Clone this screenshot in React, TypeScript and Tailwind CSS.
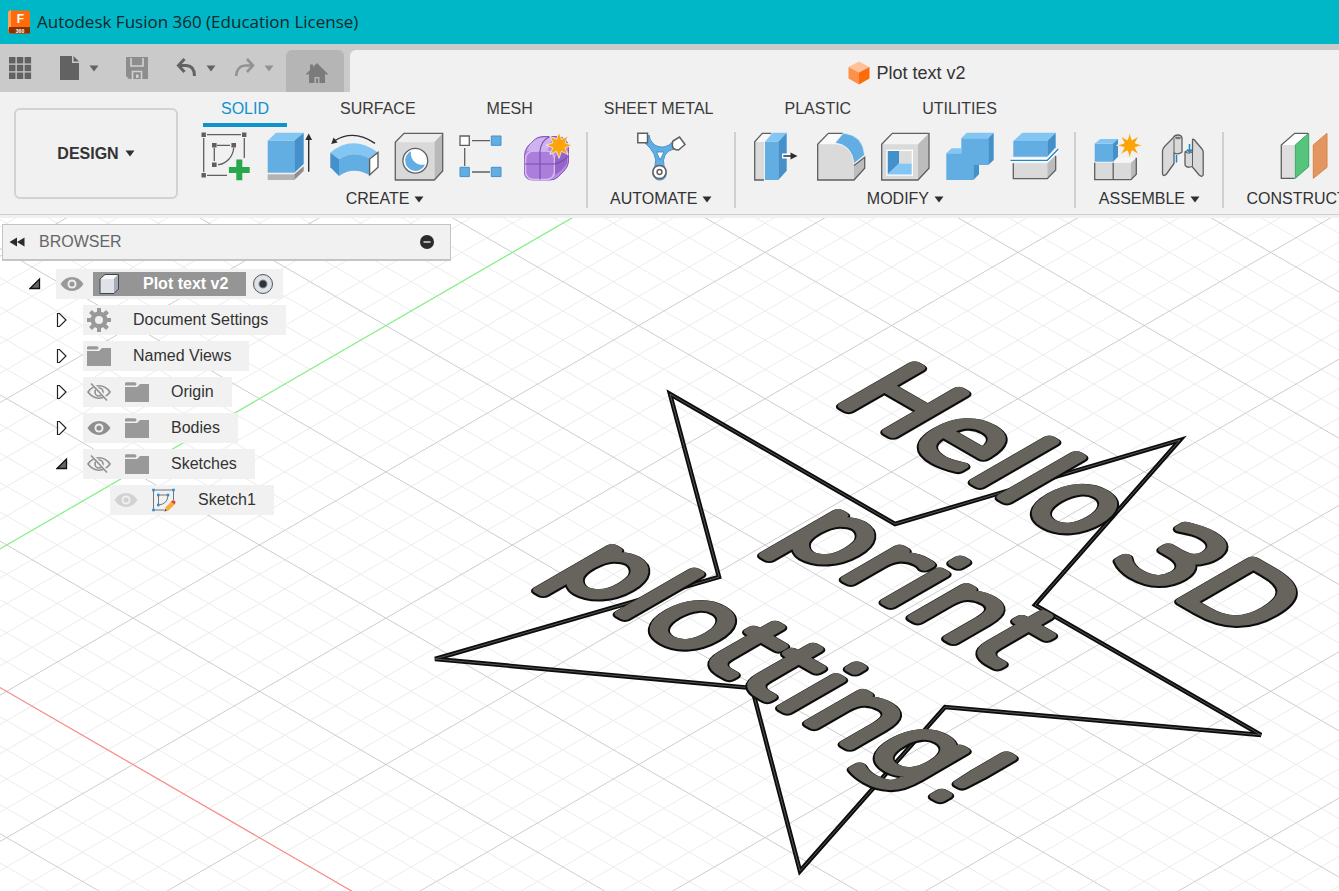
import { useState } from 'react';
import type { ReactNode } from 'react';

const INK = '#5f5f5f';
const BLUE = '#62aee3';
const BLUE_LIGHT = '#83c5f3';
const BLUE_DARK = '#4490cb';

function burst(cx: number, cy: number, outer: number, inner: number) {
  return Array.from({ length: 16 }, (_, i) => {
    const r = i % 2 ? inner : outer;
    const a = (Math.PI / 8) * i;
    return `${(cx + r * Math.sin(a)).toFixed(1)},${(cy - r * Math.cos(a)).toFixed(1)}`;
  }).join(' ');
}

function Icon({ children }: { children: ReactNode }) {
  return (
    <svg viewBox="0 0 48 48" className="h-12 w-12 overflow-visible" aria-hidden="true">
      {children}
    </svg>
  );
}

function Caret({ className = 'text-[#2f2f2f]' }: { className?: string }) {
  return (
    <svg viewBox="0 0 10 7" className={`h-[7px] w-2.5 ${className}`} aria-hidden="true">
      <path d="M0.5 0.5h9L5 6.5z" fill="currentColor" />
    </svg>
  );
}

/* ---------- ribbon icons ---------- */

function SketchIcon() {
  return (
    <Icon>
      <g stroke={INK} strokeWidth="1.3" fill="none">
        <path d="M6 2.7h34M2.7 6v34M43.3 6v20M6 43.3h20M16 13.3h13M13.3 16v13M32.7 16C32 25 25 32 17 32.7" />
      </g>
      <g fill={INK}>
        <path d="M.5.5h4.4v4.4H.5zM41 .5h4.4v4.4H41zM.5 41h4.4v4.4H.5zM11 11h4.6v4.6H11zM30.4 11H35v4.6h-4.6zM11 30.4h4.6V35H11z" />
      </g>
      <path d="M35.3 27.5h6v7.4h7.4v6h-7.4v7.4h-6v-7.4h-7.4v-6h7.4z" fill="#27a94b" />
    </Icon>
  );
}

function ExtrudeIcon() {
  return (
    <Icon>
      <path d="M2.7 42.3h26.6V48H2.7z" fill="#b3b3b3" />
      <path d="M29.3 42.3l9.4-8V39l-9.4 9z" fill="#8f8f8f" />
      <path d="M2.7 8.7h26.6v32H2.7z" fill={BLUE} />
      <path d="M2.7 8.7l8.3-8h27.7l-9.4 8z" fill={BLUE_LIGHT} />
      <path d="M29.3 8.7l9.4-8V32l-9.4 8.7z" fill={BLUE_DARK} />
      <path d="M43.7 39.7V6" stroke="#2d2d2d" strokeWidth="1.4" />
      <path d="M43.7 1.5l3.4 6.5h-6.8z" fill="#2d2d2d" />
    </Icon>
  );
}

function RevolveIcon() {
  return (
    <Icon>
      <path d="M46 11.3Q25 -3 6 8.5" stroke="#2d2d2d" strokeWidth="1.4" fill="none" />
      <path d="M2.2 12l2.4-6.5 4 5z" fill="#2d2d2d" />
      <path d="M1.3 20.7Q24 2 49 20.7L40.3 26.3Q24 17.5 10 27.3z" fill={BLUE_LIGHT} />
      <path d="M10 27.3Q24 17.5 40.3 26.3V43Q24 34 10 44z" fill={BLUE} />
      <path d="M1.3 20.7L10 27.3V44L1.3 35.3z" fill={BLUE_DARK} />
      <path d="M40.6 27L49 20.5v14.8L40.6 43z" fill="#fff" stroke={INK} strokeWidth="1.4" />
    </Icon>
  );
}

function HoleIcon() {
  return (
    <Icon>
      <path d="M2.3 10.3L11 1.3h38.7l-8.4 9z" fill="#eeeeee" />
      <path d="M41.3 10.3l8.4-9V39l-8.4 9z" fill="#b9b9b9" />
      <path d="M2.3 10.3h39V48h-39z" fill="#d9d9d9" />
      <path d="M2.3 10.3L11 1.3h38.7V39l-8.4 9h-39z" fill="none" stroke={INK} strokeWidth="1.3" />
      <circle cx="22.3" cy="28.7" r="12.4" fill="#fff" stroke={INK} strokeWidth="1.3" />
      <path d="M18 19.3a10.3 10.3 0 1 0 14 13.2A11.500 11.500 0 0 1 18 19.3z" fill={BLUE} />
    </Icon>
  );
}

function PatternIcon() {
  return (
    <Icon>
      <path d="M15 8.7h18M15 40h18M7.7 16v18" stroke={INK} strokeWidth="1.3" />
      <path d="M3 4h9.3v9.3H3z" fill="#fff" stroke={INK} strokeWidth="1.3" />
      <path d="M34.3 4H44v9.3h-9.7zM3 35.3h9.3v9.3H3zM34.3 35.3H44v9.3h-9.7z" fill={BLUE} stroke={BLUE_DARK} />
    </Icon>
  );
}

function FormIcon() {
  return (
    <Icon>
      <path
        d="M3.5 24Q3.5 18 7 14L12 9Q16 4.5 22 4.5H36Q47 5 47.5 16V30Q47 35 43 39L37 45Q34 48 29 48H12Q3.5 48 3.5 40z"
        fill="#b58be2"
        stroke="#8a57bd"
      />
      <path d="M6 19Q7 13 14 8Q18 5 24 5.5H34Q28 9 27 18z" fill="#cfb2f0" />
      <rect x="4.5" y="19" width="29" height="28.5" rx="8" fill="#ab7edb" stroke="#d6bdf3" strokeWidth="1.5" />
      <path d="M34 26Q36 20 46 17V31Q42 38 34 43z" fill="#9465c7" />
      <path d="M19 19V47.5M4 32H33.5Q42 30 47 24M19 19Q20 9 28 5" stroke="#7f4db4" strokeWidth="1.2" fill="none" />
      <polygon points={burst(38, 13.3, 13, 6.5)} fill="#fba50b" stroke="#f1f1f1" strokeWidth="0.8" />
    </Icon>
  );
}

function AutomateIcon() {
  return (
    <Icon>
      <path
        d="M8 11Q14 16 17 22Q20 28 18 34Q15 38 16 43Q18 48 22.5 48Q28 48 29 43Q30 38 27 34Q25.5 28 28 23Q31 18 37 17L36 9Q33 14 27 15Q20 15.5 16 11.5Q12.5 8 12 3z"
        fill={BLUE}
        stroke={BLUE_DARK}
      />
      <path d="M19.5 20h7.5l-4 8z" fill="#fff" stroke={BLUE_DARK} />
      <path d="M.8 1.3h9.7v9.4H.8z" fill="#fff" stroke={INK} strokeWidth="1.5" />
      <path d="M36 9l6.5-4 5.5 7.5-6.5 5.5q-5 0-6-3.5-.5-3 .5-5.5z" fill="#fff" stroke={INK} strokeWidth="1.5" />
      <circle cx="22.5" cy="40" r="6.6" fill="#fff" stroke={INK} strokeWidth="1.5" />
      <circle cx="22.5" cy="40" r="2.4" fill="none" stroke={INK} strokeWidth="1.5" />
    </Icon>
  );
}

function PressPullIcon() {
  return (
    <Icon>
      <path d="M1.7 9.7H11V48H1.7z" fill="#dadada" />
      <path d="M1.7 9.7L9.3 1.3h9.4L11 9.7z" fill="#f8f8f8" />
      <path d="M11 48H1.7V9.7L9.3 1.3h9" fill="none" stroke={INK} strokeWidth="1.3" />
      <path d="M12 9.7h13.3V48H12z" fill={BLUE} />
      <path d="M12 9.7l7.7-9h14l-8.4 9z" fill={BLUE_LIGHT} />
      <path d="M25.3 9.7l8.4-9v38l-8.4 9.3z" fill={BLUE_DARK} />
      <path d="M29 24h9" stroke="#fff" strokeWidth="5" />
      <path d="M30.3 24h9" stroke="#2d2d2d" strokeWidth="1.5" />
      <path d="M37.5 20.5l7 3.5-7 3.5z" fill="#2d2d2d" />
    </Icon>
  );
}

function FilletIcon() {
  return (
    <Icon>
      <path d="M.7 12.3L11.3 1.3h15L18.7 12.3z" fill="#fafafa" />
      <path d="M.7 12.3h18Q36 14 37 33v15H.7z" fill="#dadada" />
      <path d="M37 33.5l10.7-8.2v11L37 48z" fill="#bdbdbd" />
      <path d="M26.3 1.3h-15L.7 12.3V48H37l10.7-11.7v-11L37 33.5" fill="none" stroke={INK} strokeWidth="1.3" />
      <path d="M26.3 1Q46 3 47.7 23L37 31.6Q35 13 18 11z" fill={BLUE} stroke="#f4f4f4" strokeWidth="0.8" />
    </Icon>
  );
}

function ShellIcon() {
  return (
    <Icon>
      <path d="M.7 12.3L11.3 1.3H48L37 12.3z" fill="#f3f3f3" />
      <path d="M37 12.3l11-11v35L37 48z" fill="#bcbcbc" />
      <path d="M.7 12.3H37V48H.7z" fill="#dadada" />
      <path d="M.7 12.3L11.3 1.3H48v35L37 48H.7z" fill="none" stroke={INK} strokeWidth="1.3" />
      <path d="M5.3 17.7H32v26H5.3z" fill="#fff" />
      <path d="M18 19h12.7v12.5H18z" fill="#dcdcdc" />
      <path d="M6.7 19H18v12.5l-11.3 11z" fill={BLUE_DARK} />
      <path d="M18 31.5h12.7v11h-24z" fill={BLUE_LIGHT} />
    </Icon>
  );
}

function CombineIcon() {
  return (
    <Icon>
      <path d="M1.3 21.3h15v-15h27V33h-15v15h-27z" fill={BLUE} />
      <path d="M16.3 6.3L21.7.7h27l-5.4 5.6zM1.3 21.3l5.4-5h9.6v5z" fill={BLUE_LIGHT} />
      <path d="M43.3 6.3L48.7.7V28l-5.4 5zM28.3 33H34v9.3L28.3 48z" fill={BLUE_DARK} />
    </Icon>
  );
}

function SplitIcon() {
  return (
    <Icon>
      <path d="M4.3 9h34v15.7h-34z" fill={BLUE} />
      <path d="M4.3 9l9-8.3h33.4L38.3 9z" fill={BLUE_LIGHT} />
      <path d="M38.3 9l8.4-8.3v14.6l-8.4 9.4z" fill={BLUE_DARK} />
      <path d="M4.3 31.3h34v15.4h-34z" fill="#dadada" />
      <path d="M38.3 31.3l8.4-8.3v15l-8.4 8.7z" fill="#bcbcbc" />
      <path d="M4.3 31.3v15.4h34l8.4-8.7V24" fill="none" stroke={INK} strokeWidth="1.3" />
      <path d="M1.5 28.3h36.8L49.3 17" fill="none" stroke="#fff" strokeWidth="4" />
      <path d="M1.5 28.3h36.8L49.3 17" fill="none" stroke="#1b87c9" strokeWidth="1.3" />
    </Icon>
  );
}

function ComponentIcon() {
  return (
    <Icon>
      <path d="M1.7 11.5H20v18.2H1.7z" fill={BLUE} />
      <path d="M1.7 11.5L7.3 7H25l-5 4.5z" fill={BLUE_LIGHT} />
      <path d="M20 11.5L25 7v17.7l-5 5z" fill={BLUE_DARK} />
      <path d="M1.7 30.7h36.3v17H1.7z" fill="#dadada" />
      <path d="M20.5 30.7l5.2-5h17.6l-5.3 5z" fill="#f6f6f6" />
      <path d="M38 30.7l5.3-5v16.6L38 47.7z" fill="#b9b9b9" />
      <path d="M1.7 30.7v17H38l5.3-5.4V25.7M20.2 30.7v17" fill="none" stroke={INK} strokeWidth="1.3" />
      <polygon points={burst(36.7, 13.3, 13, 6)} fill="#fba50b" stroke="#f1f1f1" />
    </Icon>
  );
}

function JointIcon() {
  return (
    <Icon>
      <g fill="#d9d9d9" stroke={INK} strokeWidth="1.3" strokeLinejoin="round">
        <path d="M5.5 19Q6 16 8 14L16 6Q17.500 3 21 3Q24.500 3 25 6V20Q21.500 23 17 21V31.5L9.500 42Q6.500 45 5.500 42z" />
        <path d="M35.500 8q0-1.500 1.500-.5L45 17q1.200 1.500 1.200 3V43q-1.500 2.500-4 0L35 34.500Q29.500 36.500 28 33V20Q30.500 17.500 35.500 19z" />
      </g>
      <path d="M17 6.500v14.500" stroke={INK} />
      <ellipse cx="21" cy="6" rx="3" ry="1.300" fill="#777" />
      <path d="M28.300 20Q31.500 22.500 35.500 20M35.500 19v15" stroke={INK} fill="none" />
      <path d="M19.500 23v7.500M32.500 12v8M30.300 17.500l2.200 2.500 2.200-2.500" stroke="#1b87c9" strokeWidth="1.500" fill="none" />
    </Icon>
  );
}

function ConstructIcon() {
  return (
    <Icon>
      <path d="M1.3 13L14.7 1.3H28L15 13v33.3H1.3z" fill="#fff" />
      <path d="M1.3 13h13.4v33.3H1.3z" fill="#dedede" />
      <path d="M14.7 46.3H1.3V13L14.7 1.3H28" fill="none" stroke={INK} strokeWidth="1.3" />
      <path d="M15.3 13l13.4-11.7v33.4L15.3 46.3z" fill="#57c47d" stroke="#3aa362" />
      <path d="M33.3 13L47 1.3v34L33.3 46.3z" fill="#e3965f" stroke="#d98345" />
    </Icon>
  );
}

/* ---------- browser tree icons ---------- */

function EyeIcon({ className }: { className: string }) {
  return (
    <svg viewBox="0 0 24 24" className={`h-6 w-6 ${className}`} aria-hidden="true">
      <path d="M.5 12Q5 5 12 5t11.5 7Q19 19 12 19T.5 12z" fill="currentColor" />
      <circle cx="12" cy="12" r="4.5" fill="#f0f0f0" />
      <circle cx="12" cy="12" r="2.6" fill="currentColor" />
    </svg>
  );
}

function EyeOffIcon() {
  return (
    <svg viewBox="0 0 24 24" className="h-6 w-6 text-[#8f8f8f]" aria-hidden="true">
      <g fill="none" stroke="currentColor" strokeWidth="1.6">
        <path d="M1 12Q5.5 5.8 12 5.8T23 12Q18.5 18.2 12 18.2T1 12z" />
        <circle cx="12" cy="12" r="4" />
        <path d="M5 3.5L21 20.5" stroke="#f0f0f0" strokeWidth="3" />
        <path d="M4 3.5L20 20.5" />
      </g>
    </svg>
  );
}

function FolderIcon() {
  return (
    <svg viewBox="0 0 24 24" className="h-6 w-6" aria-hidden="true">
      <path d="M0 7h12l3-3H24v18H0z" fill="#999" />
      <path d="M0 5.5V3.5Q0 2.3 1.5 2.3H9.5Q11.5 2.3 11.5 4V4.5L10.5 5.5z" fill="#999" />
    </svg>
  );
}

function GearIcon() {
  return (
    <svg viewBox="0 0 24 24" className="h-6 w-6" aria-hidden="true">
      <g stroke="#999" strokeWidth="4">
        <path d="M12 0v24M0 12h24M3.5 3.5l17 17M20.5 3.5l-17 17" />
      </g>
      <circle cx="12" cy="12" r="8.5" fill="#999" />
      <circle cx="12" cy="12" r="4" fill="#f0f0f0" />
    </svg>
  );
}

function SketchNodeIcon() {
  return (
    <svg viewBox="0 0 24 24" className="h-6 w-6" aria-hidden="true">
      <path d="M1.5 2h20v10M1.5 2v20h11M6.5 7h9.5Q16 16 6.5 17z" fill="none" stroke="#777" />
      <path
        d="M.2.7h2.6v2.6H.2zM20.2.7h2.6v2.6h-2.6zM.2 20.7h2.6v2.6H.2zM5 5.7h2.6v2.6H5zM14.7 5.7h2.6v2.6h-2.6zM5 15.7h2.6v2.6H5z"
        fill="#2a8fd6"
      />
      <path d="M12.5 23.5l1.3-4.5 6-6 3.5 3-6.5 6.2z" fill="#f3ae3d" />
      <path d="M19 13.7l1.3-1.2q2-.8 3.3 1.5l-.8 2.3z" fill="#d9413c" />
      <path d="M12.5 23.5l.8-2.5 1.7 1.5z" fill="#444" />
    </svg>
  );
}

function BodyIcon() {
  return (
    <svg viewBox="0 0 22 22" className="h-[22px] w-[22px]" aria-hidden="true">
      <path d="M2 6l5-4.5h13.5L16 6z" fill="#f7f9fb" />
      <path d="M16 6l4.5-4.5v14.5L16 20.5z" fill="#a6adb6" />
      <path d="M2 6h14v14.5H2z" fill="#dfe3e9" />
      <path d="M2 6l5-4.5h13.5v14.5L16 20.5H2z" fill="none" stroke="#3f444b" strokeLinejoin="round" />
    </svg>
  );
}

/* ---------- data ---------- */

const tabs = ['SOLID', 'SURFACE', 'MESH', 'SHEET METAL', 'PLASTIC', 'UTILITIES'];

const groups = [
  {
    label: 'CREATE',
    tools: [
      { name: 'Create Sketch', icon: <SketchIcon /> },
      { name: 'Extrude', icon: <ExtrudeIcon /> },
      { name: 'Revolve', icon: <RevolveIcon /> },
      { name: 'Hole', icon: <HoleIcon /> },
      { name: 'Rectangular Pattern', icon: <PatternIcon /> },
      { name: 'Create Form', icon: <FormIcon /> },
    ],
  },
  { label: 'AUTOMATE', tools: [{ name: 'Automated Modeling', icon: <AutomateIcon /> }] },
  {
    label: 'MODIFY',
    tools: [
      { name: 'Press Pull', icon: <PressPullIcon /> },
      { name: 'Fillet', icon: <FilletIcon /> },
      { name: 'Shell', icon: <ShellIcon /> },
      { name: 'Combine', icon: <CombineIcon /> },
      { name: 'Split Body', icon: <SplitIcon /> },
    ],
  },
  {
    label: 'ASSEMBLE',
    tools: [
      { name: 'New Component', icon: <ComponentIcon /> },
      { name: 'Joint', icon: <JointIcon /> },
    ],
  },
  { label: 'CONSTRUCT', tools: [{ name: 'Offset Plane', icon: <ConstructIcon /> }] },
];

type TreeNode = {
  label: string;
  icon: ReactNode;
  indent: string;
  expanded?: boolean;
  eye?: 'on' | 'off' | 'dim';
};

const nodes: TreeNode[] = [
  { label: 'Document Settings', icon: <GearIcon />, indent: 'pl-14', expanded: false },
  { label: 'Named Views', icon: <FolderIcon />, indent: 'pl-14', expanded: false },
  { label: 'Origin', icon: <FolderIcon />, indent: 'pl-14', expanded: false, eye: 'off' },
  { label: 'Bodies', icon: <FolderIcon />, indent: 'pl-14', expanded: false, eye: 'on' },
  { label: 'Sketches', icon: <FolderIcon />, indent: 'pl-14', expanded: true, eye: 'off' },
  { label: 'Sketch1', icon: <SketchNodeIcon />, indent: 'pl-[83px]', eye: 'dim' },
];

/* ---------- viewport ---------- */

// Half the width and height of one major grid cell, and where the grid starts
const CELL_X = 126.4;
const CELL_Y = 73.15;
const ORIGIN_X = 6.7;
const ORIGIN_Y = 327;

function gridPath(divisions: number, skipMajor: boolean) {
  const slope = CELL_Y / CELL_X;
  const step = (CELL_Y * 2) / divisions;
  const reach = 4000;
  let d = '';
  for (let i = -20 * divisions; i <= 20 * divisions; i++) {
    if (skipMajor && i % divisions === 0) continue;
    const y = ORIGIN_Y + i * step;
    d += `M${ORIGIN_X - reach} ${y - reach * slope}L${ORIGIN_X + reach} ${y + reach * slope}`;
    d += `M${ORIGIN_X - reach} ${y + reach * slope}L${ORIGIN_X + reach} ${y - reach * slope}`;
  }
  return d;
}

const STAR = '670,176 895,306 1180,222 1035,387 1261,517 945,489 800,653 752,470 435,441 719,359';

const engraving = [
  { text: 'Hello 3D', x: 832, y: 181 },
  { text: 'print', x: 774, y: 319 },
  { text: 'plotting!', x: 548, y: 354 },
];

function Viewport() {
  return (
    <svg className="absolute inset-0 h-full w-full" role="img" aria-label="Model view">
      <path d={gridPath(5, true)} stroke="#ececec" fill="none" />
      <path d={gridPath(1, false)} stroke="#cdcdcd" fill="none" />
      <path d="M-10 463.8L1990 1621.2" stroke="#ff8d8d" strokeWidth="1.2" />
      <path d="M-10 336.7L1990 -820.7" stroke="#86f586" strokeWidth="1.2" />
      <polygon points={STAR} fill="none" stroke="#0c0c0c" strokeWidth="4.5" />
      <polygon points={STAR} fill="none" stroke="#55554f" strokeWidth="1" />
      {engraving.map((line) => (
        <g
          key={line.text}
          transform={`matrix(0.866 0.5 -0.866 0.5 ${line.x} ${line.y})`}
          className="font-['DejaVu_Sans',sans-serif] text-[112px] font-extralight"
          strokeLinejoin="round"
        >
          <text x="1" y="1" fill="#0c0c0c" stroke="#0c0c0c" strokeWidth="13" aria-hidden="true">
            {line.text}
          </text>
          <text fill="#66645c" stroke="#66645c" strokeWidth="10">
            {line.text}
          </text>
        </g>
      ))}
    </svg>
  );
}

/* ---------- sections ---------- */

function TitleBar() {
  return (
    <header className="flex h-11 items-center gap-1.5 bg-[#00b7c7] pl-2">
      <svg viewBox="0 0 23 26" className="h-[26px] w-[23px]" aria-hidden="true">
        <path d="M2 1.5h18q2 0 2 2v21H2q-2 0-2-2v-19q0-2 2-2z" fill="#ff6b0b" />
        <path d="M0 3l3-2.5V18L0 20z" fill="#ffa45c" />
        <path d="M1 18h21v6.5H3q-2 0-2-2z" fill="#8a3300" />
        <text x="12.5" y="14" textAnchor="middle" className="font-['Liberation_Sans',sans-serif] text-[12px] font-bold" fill="#fff">
          F
        </text>
        <text x="12" y="23.5" textAnchor="middle" className="font-['Liberation_Sans',sans-serif] text-[5px] font-bold" fill="#fff">
          360
        </text>
      </svg>
      <h1 className="font-['Open_Sans',sans-serif] text-[17px] text-[#10282b]">
        Autodesk Fusion 360 (Education License)
      </h1>
    </header>
  );
}

function QuickBar() {
  return (
    <div className="flex h-12 items-end bg-[#cacaca]">
      <div className="flex h-12 w-[286px] shrink-0 items-center pl-2">
        <button type="button" aria-label="Data panel" className="w-[51px] text-[#626262]">
          <svg viewBox="0 0 24 24" className="h-6 w-6">
            <path
              d="M1 1h6.5v6.5H1zM8.8 1h6.5v6.5H8.8zM16.6 1h6.5v6.5h-6.5zM1 8.8h6.5v6.5H1zM8.8 8.8h6.5v6.5H8.8zM16.6 8.8h6.5v6.5h-6.5zM1 16.6h6.5v6.5H1zM8.8 16.6h6.5v6.5H8.8zM16.6 16.6h6.5v6.5h-6.5z"
              fill="currentColor"
            />
          </svg>
        </button>
        <button type="button" aria-label="File" className="flex w-[66px] items-center gap-2 text-[#626262]">
          <svg viewBox="0 0 22 26" className="h-[26px] w-[22px]">
            <path d="M1 1h12v7h7v17H1z" fill="currentColor" />
            <path d="M14.5 1v5.5H20z" fill="currentColor" />
          </svg>
          <Caret className="text-[#626262]" />
        </button>
        <button type="button" aria-label="Save" className="w-[50px] text-[#8d8d8d]">
          <svg viewBox="0 0 24 24" className="h-6 w-6">
            <path d="M1 1h22v22H4l-3-3z" fill="currentColor" />
            <path d="M6 2v8h12V2M7.5 23v-7.5h9V23" fill="none" stroke="#d2d2d2" strokeWidth="1.6" />
            <path d="M11 18.5h2.5V22H11z" fill="#d2d2d2" />
          </svg>
        </button>
        <button type="button" aria-label="Undo" className="flex w-[58px] items-center gap-[9px] text-[#626262]">
          <svg viewBox="0 0 22 22" className="h-[22px] w-[22px]">
            <path d="M9.5 2L3.5 8.5l6 6.5M4 8.5h7.5q8 .5 8 10.5" fill="none" stroke="currentColor" strokeWidth="3" />
          </svg>
          <Caret className="text-[#626262]" />
        </button>
        <button type="button" aria-label="Redo" className="flex items-center gap-[9px] text-[#929292]">
          <svg viewBox="0 0 22 22" className="h-[22px] w-[22px]">
            <path d="M14 2l6 6.5-6 6.5M20 8.5h-8q-8 .5-9 10.5" fill="none" stroke="currentColor" strokeWidth="2.6" />
          </svg>
          <Caret className="text-[#929292]" />
        </button>
      </div>
      <button
        type="button"
        aria-label="Home"
        className="mr-1.5 flex h-[42px] w-[58px] shrink-0 items-center justify-center rounded-t-md bg-[#b5b5b5] pt-1 pl-1 text-[#7b7b7b]"
      >
        <svg viewBox="0 0 22 20" className="h-5 w-[22px]">
          <path d="M11 0L22 11l-1.3 1L19 10.5V20h-5.5v-6h-5v6H3v-9.5L1.3 12 0 11l4-4V1.5h3V4z" fill="currentColor" />
          <path d="M10 15.5h2.2V20H10z" fill="currentColor" />
        </svg>
      </button>
      <div className="flex h-[42px] grow items-center justify-center gap-1.5 rounded-tl-md bg-[#f1f1f1] pt-1 pl-[125px] text-[18px] text-[#333]">
        <svg viewBox="0 0 22 24" className="h-6 w-[22px]" aria-hidden="true">
          <path d="M11 .5L21.5 6 11 11.5.5 6z" fill="#ffc09a" />
          <path d="M.5 6L11 11.5V23.5L.5 17.5z" fill="#fe9149" />
          <path d="M21.5 6L11 11.5V23.5l10.5-6z" fill="#fd6c0c" />
        </svg>
        <span>Plot text v2</span>
      </div>
    </div>
  );
}

function Ribbon() {
  const [active, setActive] = useState('SOLID');

  return (
    <div className="flex h-[123px] gap-[5px] overflow-hidden border-b border-[#cfcfcf] bg-[#f1f1f1] pl-3.5 text-base">
      <button
        type="button"
        className="mt-4 flex h-[91px] w-[164px] shrink-0 items-center justify-center gap-1.5 rounded-md border-2 border-[#d2d2d2] font-bold"
      >
        DESIGN
        <Caret />
      </button>
      <div className="flex min-w-0 flex-col">
        <nav className="flex gap-[35px] pl-5">
          {tabs.map((tab) => (
            <button
              key={tab}
              type="button"
              onClick={() => setActive(tab)}
              className={`h-[35px] shrink-0 border-b-4 px-[18px] pt-0.5 ${
                active === tab ? 'border-[#0e93cf] text-[#0e93cf]' : 'border-transparent text-[#3a3a3a]'
              }`}
            >
              {tab}
            </button>
          ))}
        </nav>
        <div className="mt-[5px] flex">
          {groups.map((group) => (
            <div
              key={group.label}
              className="flex h-[76px] shrink-0 flex-col items-center border-r-2 border-[#d0d0d0] px-[17px] first:pl-[18px] last:border-r-0"
            >
              <div className="flex gap-4">
                {group.tools.map((tool) => (
                  <button key={tool.name} type="button" aria-label={tool.name}>
                    {tool.icon}
                  </button>
                ))}
              </div>
              <button type="button" className="mt-[9px] flex items-center gap-[5px] px-[5px] leading-5">
                {group.label}
                <Caret />
              </button>
            </div>
          ))}
        </div>
      </div>
    </div>
  );
}

function Toggle({ expanded }: { expanded: boolean }) {
  return (
    <button type="button" aria-label={expanded ? 'Collapse' : 'Expand'} className="w-[27px] shrink-0">
      <svg viewBox="0 0 12 16" className="h-4 w-3">
        {expanded ? (
          <path d="M1 12.5L10.5 3v9.5z" fill="#666" stroke="#111" strokeWidth="1.3" />
        ) : (
          <path d="M1.5 1.5h2L10 8l-6.5 6.5h-2z" fill="#fff" stroke="#222" strokeWidth="1.2" />
        )}
      </svg>
    </button>
  );
}

function BrowserPanel() {
  return (
    <aside className="relative mt-1.5 ml-0.5 w-[449px]">
      <div className="flex h-[37px] items-center border border-b-2 border-[#c4c4c4] bg-[#f1f1f1] pr-4 pl-1.5">
        <button type="button" aria-label="Collapse panel" className="mr-3.5">
          <svg viewBox="0 0 16 10" className="h-2.5 w-4">
            <path d="M8 .5v9L.5 5zM15.5.5v9L8 5z" fill="#2b2b2b" />
          </svg>
        </button>
        <h2 className="grow text-base text-[#666]">BROWSER</h2>
        <button type="button" aria-label="Display settings">
          <svg viewBox="0 0 14 14" className="h-3.5 w-3.5">
            <circle cx="7" cy="7" r="7" fill="#2b2b2b" />
            <path d="M3.5 7h7" stroke="#ddd" strokeWidth="1.5" />
          </svg>
        </button>
      </div>
      <ul className="-ml-0.5 pt-[5px] text-base text-[#333]">
        <li className="flex h-9 items-center pl-[29px]">
          <Toggle expanded />
          <div className="flex h-[30px] items-center gap-[9px] bg-[#f1f1f1] pr-2.5 pl-1">
            <button type="button" aria-label="Hide Plot text v2">
              <EyeIcon className="text-[#999]" />
            </button>
            <label
              htmlFor="activate"
              className="flex h-6 items-center gap-[23px] bg-[#959595] pr-[18px] pl-[5px] font-bold text-white"
            >
              <BodyIcon />
              Plot text v2
            </label>
            <input
              id="activate"
              type="radio"
              defaultChecked
              className="-ml-0.5 h-5 w-5 appearance-none rounded-full border border-[#555] bg-[radial-gradient(circle,#30343a_0_3px,#e3e7ed_5px,#cdd3dc)]"
            />
          </div>
        </li>
        {nodes.map((node) => (
          <li key={node.label} className={`flex h-9 items-center ${node.indent}`}>
            {node.expanded !== undefined ? <Toggle expanded={node.expanded} /> : <span className="w-[27px]" />}
            <div className="flex h-[30px] items-center bg-[#f1f1f1] pr-[18px] pl-1">
              {node.eye && (
                <button type="button" aria-label={`Visibility of ${node.label}`} className="mr-3.5">
                  {node.eye === 'off' ? (
                    <EyeOffIcon />
                  ) : (
                    <EyeIcon className={node.eye === 'on' ? 'text-[#8f8f8f]' : 'text-[#d2d2d2]'} />
                  )}
                </button>
              )}
              <span className="mr-[22px]">{node.icon}</span>
              {node.label}
            </div>
          </li>
        ))}
      </ul>
    </aside>
  );
}

export default function App() {
  return (
    <div className="flex min-h-screen flex-col overflow-hidden bg-[#f1f1f1] font-['Liberation_Sans',Arial,sans-serif] text-[#333]">
      <TitleBar />
      <QuickBar />
      <Ribbon />
      <main className="relative mt-[3px] grow overflow-hidden bg-white">
        <Viewport />
        <BrowserPanel />
      </main>
    </div>
  );
}
